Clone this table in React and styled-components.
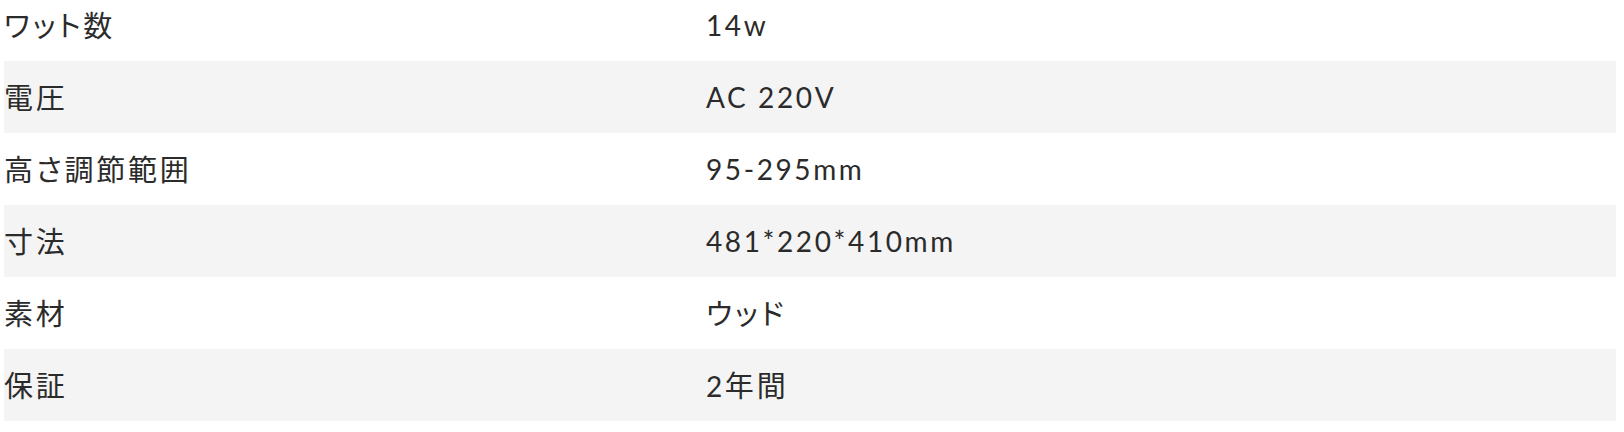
import React from 'react'
import styled, {createGlobalStyle} from 'styled-components'

const Global = createGlobalStyle`
  body {
    margin: 0;
    background: #fff;
    font-family: 'Lato', 'Noto Sans CJK JP', sans-serif;
    color: #2b2b2b;
  }
`

const Table = styled.div`
  margin: -11px 8px 0 4px;
  display: flex;
  flex-direction: column;
`

const Row = styled.div`
  display: grid;
  grid-template-columns: 702px 1fr;
  align-items: center;
  height: 72px;
  background: ${props => props.striped ? '#f4f4f4' : '#fff'};
`

const Cell = styled.div`
  font-size: 28px;
  letter-spacing: 2.6px;
  line-height: 1;
  white-space: nowrap;
`

// japanese runs sit a bit larger, kana proportional
const Jp = styled.span`
  font-family: 'Noto Sans CJK JP', sans-serif;
  font-size: 29px;
  letter-spacing: 2.8px;
  font-feature-settings: "palt";
`

const splitJp = text =>
  text.split(/([\u3000-\u9fff]+)/).filter(Boolean).map((part, i) =>
    /[\u3000-\u9fff]/.test(part) ? <Jp key={i}>{part}</Jp> : <span key={i}>{part}</span>
  )

const specs = [
  ['ワット数', '14w'],
  ['電圧', 'AC 220V'],
  ['高さ調節範囲', '95-295mm'],
  ['寸法', '481*220*410mm'],
  ['素材', 'ウッド'],
  ['保証', '2年間'],
]

export default function App() {
  return (
    <>
      <Global />
      <Table>
        {specs.map(([label, value], i) => (
          <Row key={label} striped={i % 2 === 1}>
            <Cell>{splitJp(label)}</Cell>
            <Cell>{splitJp(value)}</Cell>
          </Row>
        ))}
      </Table>
    </>
  )
}
